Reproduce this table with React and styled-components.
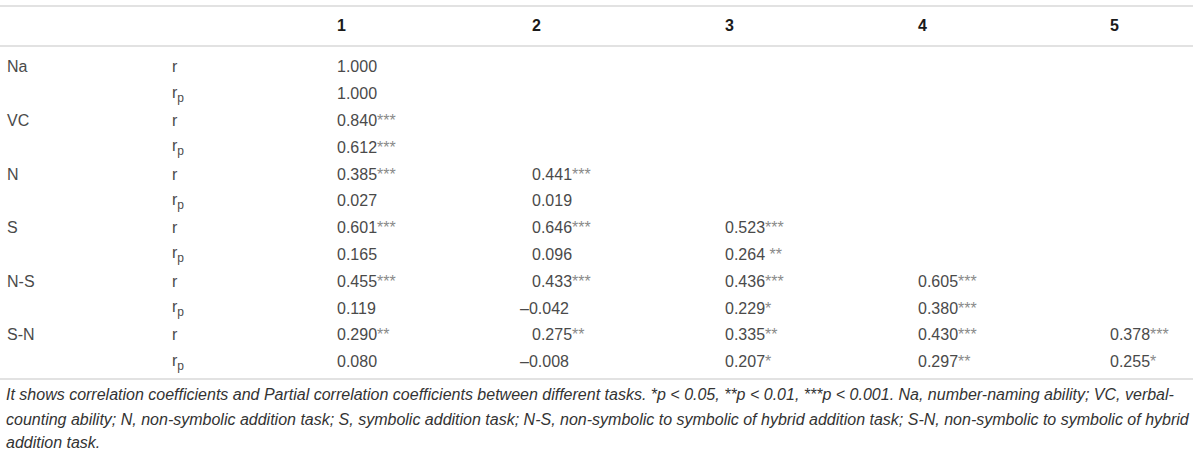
import React from "react";
import styled, { createGlobalStyle } from "styled-components";

const GlobalStyle = createGlobalStyle`
  body {
    margin: 0;
    background: #ffffff;
    font-family: "Liberation Sans", Arial, sans-serif;
  }
`;

const Wrapper = styled.div`
  width: 1193px;
  padding-top: 5px;
`;

const Table = styled.table`
  width: 100%;
  border-collapse: collapse;
  table-layout: fixed;
  border-top: 2px solid #e2e2e2;
  border-bottom: 2px solid #e2e2e2;
  font-size: 16px;
  color: #4a4a4a;
`;

const Col = styled.col`
  width: ${(p) => p.$w || "auto"};
`;

const HeadCell = styled.th`
  height: 38px;
  padding: 0 0 0 7px;
  text-align: left;
  font-weight: 700;
  color: #1a1a1a;
  border-bottom: 2px solid #e2e2e2;
`;

const Cell = styled.td`
  height: 26.8px;
  padding: 0 0 0 7px;
  text-align: left;
  white-space: nowrap;
`;

const SpacerRow = styled.tr`
  height: ${(p) => p.$h}px;
`;

const Stars = styled.span`
  color: #8a8a8a;
`;

const Negative = styled.span`
  margin-left: -12px;
`;

const Sub = styled.sub`
  font-size: 12px;
`;

const Note = styled.div`
  padding: 2px 0 0 6px;
  font-size: 16px;
  font-style: italic;
  line-height: 25px;
  color: #333333;
`;

const NoteLine = styled.span`
  display: block;
  white-space: nowrap;
  line-height: ${(p) => (p.$last ? "21px" : "25px")};
`;

const rows = [
  ["Na", ["1.000"], ["1.000"]],
  ["VC", ["0.840***"], ["0.612***"]],
  ["N", ["0.385***", "0.441***"], ["0.027", "0.019"]],
  ["S", ["0.601***", "0.646***", "0.523***"], ["0.165", "0.096", "0.264 **"]],
  [
    "N-S",
    ["0.455***", "0.433***", "0.436***", "0.605***"],
    ["0.119", "–0.042", "0.229*", "0.380***"],
  ],
  [
    "S-N",
    ["0.290**", "0.275**", "0.335**", "0.430***", "0.378***"],
    ["0.080", "–0.008", "0.207*", "0.297**", "0.255*"],
  ],
];

function Value({ text }) {
  const m = text.match(/^([^*]*?)(\s?\*+)?$/);
  const num = m[1];
  const stars = m[2] || "";
  const body = num.startsWith("–") ? <Negative>{num}</Negative> : num;
  return (
    <>
      {body}
      {stars && <Stars>{stars}</Stars>}
    </>
  );
}

function DataRow({ label, kind, values }) {
  const cells = [];
  for (let i = 0; i < 5; i++) {
    cells.push(<Cell key={i}>{values[i] ? <Value text={values[i]} /> : null}</Cell>);
  }
  return (
    <tr>
      <Cell>{label}</Cell>
      <Cell>
        {kind === "r" ? (
          "r"
        ) : (
          <>
            r<Sub>p</Sub>
          </>
        )}
      </Cell>
      {cells}
    </tr>
  );
}

export default function App() {
  return (
    <>
      <GlobalStyle />
      <Wrapper>
        <Table>
          <colgroup>
            <Col $w="165px" />
            <Col $w="165px" />
            <Col $w="195px" />
            <Col $w="193px" />
            <Col $w="193px" />
            <Col $w="192px" />
            <Col />
          </colgroup>
          <thead>
            <tr>
              <HeadCell />
              <HeadCell />
              <HeadCell>1</HeadCell>
              <HeadCell>2</HeadCell>
              <HeadCell>3</HeadCell>
              <HeadCell>4</HeadCell>
              <HeadCell>5</HeadCell>
            </tr>
          </thead>
          <tbody>
            <SpacerRow $h={8} />
            {rows.map(([label, r, rp]) => (
              <React.Fragment key={label}>
                <DataRow label={label} kind="r" values={r} />
                <DataRow label="" kind="rp" values={rp} />
              </React.Fragment>
            ))}
            <SpacerRow $h={3} />
          </tbody>
        </Table>
        <Note>
          <NoteLine>
            It shows correlation coefficients and Partial correlation coefficients between different tasks. *p &lt; 0.05, **p &lt; 0.01, ***p &lt; 0.001. Na, number-naming ability; VC, verbal-
          </NoteLine>
          <NoteLine>
            counting ability; N, non-symbolic addition task; S, symbolic addition task; N-S, non-symbolic to symbolic of hybrid addition task; S-N, non-symbolic to symbolic of hybrid
          </NoteLine>
          <NoteLine $last>addition task.</NoteLine>
        </Note>
      </Wrapper>
    </>
  );
}
